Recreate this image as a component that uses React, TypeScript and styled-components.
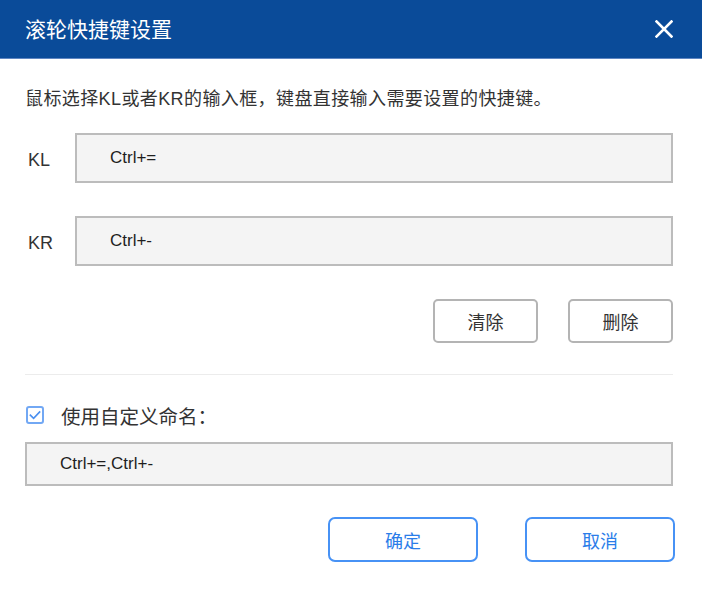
import styled, { createGlobalStyle } from 'styled-components';

const GlobalStyle = createGlobalStyle`
  html, body {
    margin: 0;
    padding: 0;
    background: #ffffff;
  }
  * {
    box-sizing: border-box;
  }
`;

const Dialog = styled.div`
  width: 702px;
  height: 592px;
  background: #ffffff;
  font-family: 'Liberation Sans', 'Noto Sans CJK SC', sans-serif;
  color: #333333;
  overflow: hidden;
`;

const Header = styled.div`
  height: 59px;
  padding: 0 29px 0 25px;
  display: flex;
  align-items: center;
  justify-content: space-between;
  background: #0a4b99;
  border-bottom: 1px solid #5f86c2;
`;

const Title = styled.h1`
  margin: 0;
  font-size: 21px;
  font-weight: 400;
  line-height: 28px;
  color: #ffffff;
  padding-top: 2px;
`;

const CloseButton = styled.button`
  width: 18px;
  height: 18px;
  padding: 0;
  border: none;
  background: transparent;
  cursor: pointer;
  display: flex;
  align-items: center;
  justify-content: center;
`;

const Body = styled.div`
  padding: 0 29px 0 25px;
  display: flex;
  flex-direction: column;
`;

const Hint = styled.p`
  margin: 28px 0 0;
  font-size: 18px;
  line-height: 24px;
  letter-spacing: 0.4px;
  color: #333333;
`;

const FieldRow = styled.div<{ $top: number }>`
  display: flex;
  align-items: center;
  margin-top: ${p => p.$top}px;
`;

const FieldLabel = styled.label`
  width: 50px;
  padding-left: 3px;
  font-size: 18px;
  line-height: 24px;
  color: #333333;
  padding-top: 4px;
`;

const KeyInput = styled.div<{ $height: number; $indent: number }>`
  flex: 1;
  height: ${p => p.$height}px;
  display: flex;
  align-items: center;
  padding-left: ${p => p.$indent}px;
  background: #f4f4f4;
  border: 2px solid #bcbcbc;
  font-size: 17px;
  color: #1e1e1e;
`;

const ActionRow = styled.div`
  display: flex;
  justify-content: flex-end;
  gap: 30px;
  margin-top: 33px;
`;

const GrayButton = styled.button`
  width: 105px;
  height: 44px;
  background: #ffffff;
  border: 2px solid #b4b4b4;
  border-radius: 5px;
  font-family: inherit;
  font-size: 18px;
  color: #333333;
  cursor: pointer;
`;

const Divider = styled.hr`
  margin: 31px 0 0;
  border: none;
  height: 1px;
  background: #ececec;
`;

const CheckRow = styled.label`
  display: flex;
  align-items: center;
  gap: 17px;
  margin-top: 28px;
  padding-left: 1px;
  height: 24px;
  font-size: 19.5px;
  color: #333333;
  cursor: pointer;
`;

const CheckBox = styled.span`
  flex: 0 0 18px;
  width: 18px;
  height: 18px;
  border: 2px solid #72a8f4;
  border-radius: 3px;
  display: flex;
  align-items: center;
  justify-content: center;
  background: #ffffff;
`;

const Footer = styled.div`
  display: flex;
  justify-content: flex-end;
  gap: 47px;
  margin: 31px -2px 0 0;
`;

const PrimaryButton = styled.button`
  width: 150px;
  height: 45px;
  background: #ffffff;
  border: 2px solid #4792f5;
  border-radius: 7px;
  font-family: inherit;
  font-size: 18px;
  color: #2a7de9;
  cursor: pointer;
`;

export default function App() {
  return (
    <>
      <GlobalStyle />
      <Dialog>
        <Header>
          <Title>滚轮快捷键设置</Title>
          <CloseButton aria-label="关闭">
            <svg width="18" height="18" viewBox="0 0 18 18">
              <path d="M1.5 1.5 L16.5 16.5 M16.5 1.5 L1.5 16.5" stroke="#ffffff" strokeWidth="2.6" strokeLinecap="square" />
            </svg>
          </CloseButton>
        </Header>
        <Body>
          <Hint>鼠标选择KL或者KR的输入框，键盘直接输入需要设置的快捷键。</Hint>
          <FieldRow $top={22}>
            <FieldLabel>KL</FieldLabel>
            <KeyInput $height={50} $indent={33}>Ctrl+=</KeyInput>
          </FieldRow>
          <FieldRow $top={33}>
            <FieldLabel>KR</FieldLabel>
            <KeyInput $height={50} $indent={33}>Ctrl+-</KeyInput>
          </FieldRow>
          <ActionRow>
            <GrayButton>清除</GrayButton>
            <GrayButton>删除</GrayButton>
          </ActionRow>
          <Divider />
          <CheckRow>
            <CheckBox>
              <svg width="12" height="10" viewBox="0 0 12 10">
                <path d="M0.8 4.6 L4.6 8.4 L11.2 1.4" fill="none" stroke="#4a8ff0" strokeWidth="1.6" />
              </svg>
            </CheckBox>
            使用自定义命名：
          </CheckRow>
          <FieldRow $top={15}>
            <KeyInput $height={44} $indent={33}>Ctrl+=,Ctrl+-</KeyInput>
          </FieldRow>
          <Footer>
            <PrimaryButton>确定</PrimaryButton>
            <PrimaryButton>取消</PrimaryButton>
          </Footer>
        </Body>
      </Dialog>
    </>
  );
}
